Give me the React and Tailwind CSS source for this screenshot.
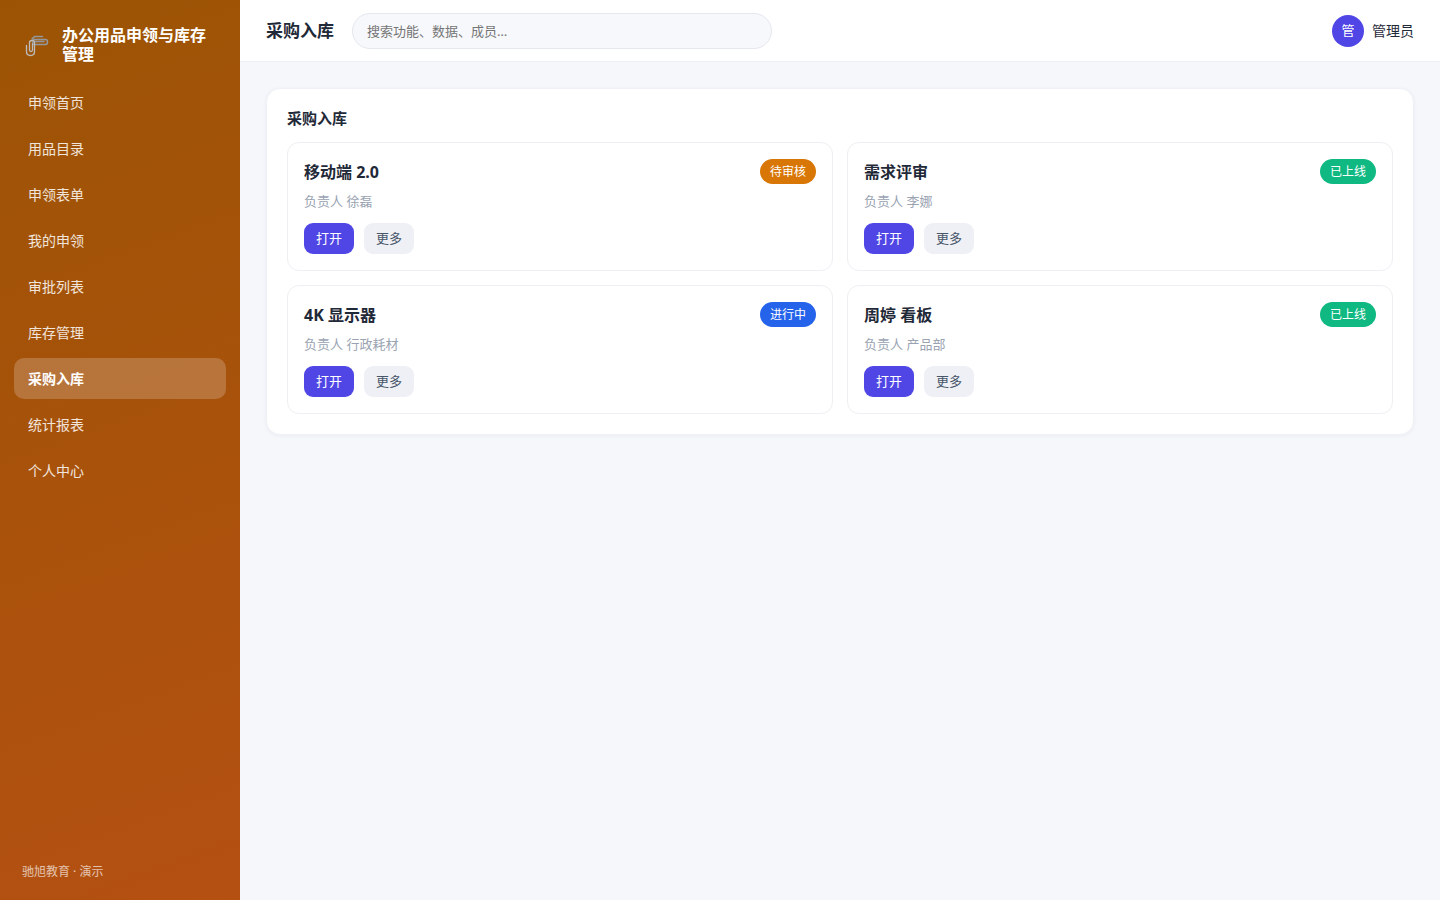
import clsx from "clsx"

const navItems = [
    "申领首页",
    "用品目录",
    "申领表单",
    "我的申领",
    "审批列表",
    "库存管理",
    "采购入库",
    "统计报表",
    "个人中心",
];

const records = [
    { title: "移动端 2.0", owner: "徐磊", status: "待审核", color: "bg-[#d97706]" },
    { title: "需求评审", owner: "李娜", status: "已上线", color: "bg-[#10b981]" },
    { title: "4K 显示器", owner: "行政耗材", status: "进行中", color: "bg-[#2563eb]" },
    { title: "周婷 看板", owner: "产品部", status: "已上线", color: "bg-[#10b981]" },
];

// two linked paper clips
function ClipsIcon() {
    return (
        <svg className="w-[30px] h-[26px] shrink-0" viewBox="0 0 30 26" fill="none" strokeLinecap="round" strokeLinejoin="round" aria-hidden="true">
            <path d="M12.5 4.5H20.5M10 7 12.5 4.5M11.500 7.500H23.500Q25.500 7.500 25.500 10T23.500 12.500H13Q10.500 12.500 10.500 11T13 9.500H22" stroke="#94989c" strokeWidth="1.5" />
            <path d="M4.500 13.500V19.500Q4.500 23.500 8.500 23.500T12.500 19.500V10.500Q12.500 8.500 10 8.500T7.500 10.500V18Q7.500 19.500 9 19.500T10.500 18V12" stroke="#bdbdbd" strokeWidth="1.3" />
        </svg>
    )
}

function Sidebar() {
    return (
        <aside className="w-60 shrink-0 flex flex-col px-3.5 py-5 bg-[linear-gradient(160deg,#9c5404,#b45012)] text-white">
            <div className="flex items-center gap-2.5 px-2 pt-1.5 pb-[18px]">
                <ClipsIcon />
                <div className="text-base leading-[19px] font-bold">办公用品申领与库存管理</div>
            </div>
            <nav className="flex flex-col gap-[5px]">
                {navItems.map((item) => (
                    <a
                        key={item}
                        href="#"
                        className={clsx(
                            "h-[41px] flex items-center px-3.5 rounded-[10px] text-sm",
                            item === "采购入库" ? "bg-white/20 font-bold" : "text-white/85"
                        )}
                    >
                        {item}
                    </a>
                ))}
            </nav>
            <div className="mt-auto px-2 text-xs text-white/65">驰旭教育 · 演示</div>
        </aside>
    )
}

function Header() {
    return (
        <header className="flex items-center gap-[18px] px-[26px] h-[62px] bg-white border-b border-[#eceef3]">
            <h1 className="text-[17px] font-bold">采购入库</h1>
            <input
                type="search"
                aria-label="搜索"
                placeholder="搜索功能、数据、成员…"
                className="w-[420px] h-9 px-3.5 rounded-full border border-[#e5e7ef] bg-[#f7f8fc] text-[13px] placeholder:text-[#757575]"
            />
            <div className="ml-auto flex items-center gap-2 text-sm">
                <span className="w-8 h-8 rounded-full bg-[#4f46e5] text-white text-[13px] flex items-center justify-center">管</span>
                <span>管理员</span>
            </div>
        </header>
    )
}

function RecordCard({ record }) {
    return (
        <article className="p-4 bg-white border border-[#eeeff3] rounded-xl">
            <div className="flex items-center justify-between">
                <h3 className="text-base leading-6 font-bold">{record.title}</h3>
                <span className={clsx("h-[25px] px-2.5 flex items-center rounded-full text-xs text-white", record.color)}>
                    {record.status}
                </span>
            </div>
            <p className="mt-[7px] text-[13px] leading-5 text-[#9aa3b2]">负责人 {record.owner}</p>
            <div className="mt-3 flex gap-2.5 text-[13px]">
                <button type="button" className="h-[31px] px-3 rounded-[9px] bg-[#4f46e5] text-white">打开</button>
                <button type="button" className="h-[31px] px-3 rounded-[9px] bg-[#eef0f5] text-[#475569]">更多</button>
            </div>
        </article>
    )
}

export default function App() {
    return (
        <div className="min-h-screen flex bg-[#f5f7fb] text-[#1f2937] font-['Noto_Sans','Noto_Sans_CJK_SC',sans-serif]">
            <Sidebar />
            <div className="flex-1 min-w-0">
                <Header />
                <main className="p-[26px]">
                    <section className="p-5 bg-white border border-[#f0f1f6] rounded-[14px] shadow-[0_1px_4px_rgba(30,40,90,0.05)]">
                        <h2 className="mb-[15px] text-[15px] leading-[18px] font-bold">采购入库</h2>
                        <div className="grid grid-cols-2 gap-3.5">
                            {records.map((record) => (
                                <RecordCard key={record.title} record={record} />
                            ))}
                        </div>
                    </section>
                </main>
            </div>
        </div>
    )
};
